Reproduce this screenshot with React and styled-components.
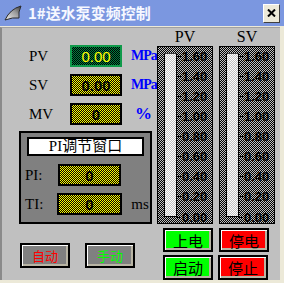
import React from 'react';
import styled, { createGlobalStyle, css } from 'styled-components';

const GlobalStyle = createGlobalStyle`
    html, body {
        margin: 0;
        padding: 0;
        background: #ece9d8;
    }
    body {
        font-family: "Liberation Serif", "Noto Sans CJK SC", serif;
    }
`;

// 1px dither brush aligned to the window, like a GDI pattern brush:
// XOR of two stripe layers gives a black/white checker, then tint it
const dither = (color, mode = 'multiply', shift = 1) => css`
    background:
        linear-gradient(${color}, ${color}),
        linear-gradient(90deg, #fff 1px, #000 1px) ${shift}px 0 / 2px 2px fixed,
        linear-gradient(#fff 1px, #000 1px) 0 0 / 2px 2px fixed;
    background-blend-mode: ${mode}, difference, normal;
`;

const Window = styled.div`
    width: 284px;
    height: 283px;
    display: flex;
    flex-direction: column;
    background: #ece9d8;
    overflow: hidden;
`;

const TitleBar = styled.div`
    height: 26px;
    flex: none;
    display: flex;
    align-items: center;
    gap: 5px;
    padding: 0 4px 0 4px;
    background: #7b97e0;
`;

const TitleText = styled.span`
    color: #f6f8ff;
    font: bold 15px "Noto Sans CJK SC", sans-serif;
    line-height: 26px;
`;

const CloseButton = styled.div`
    margin-left: auto;
    width: 17px;
    height: 19px;
    box-sizing: border-box;
    background: #ece9d8;
    border: 1px solid;
    border-color: #fff #404040 #404040 #fff;
    display: flex;
    align-items: center;
    justify-content: center;
`;

const Body = styled.div`
    flex: 1;
    margin: 1px 4px 3px 0;
    border-top: 1px solid #a0a0a0;
    border-left: 2px solid #8a8a8a;
    background: #c0c0c0;
    display: flex;
`;

const LeftPane = styled.div`
    width: 150px;
    padding-top: 17px;
    display: flex;
    flex-direction: column;
`;

const ValueRow = styled.div`
    display: grid;
    grid-template-columns: 32px 52px max-content;
    column-gap: 9px;
    align-items: center;
    height: 22px;
    padding-left: 27px;
    margin-bottom: ${p => p.$gap || 0}px;
`;

const Label = styled.span`
    font-size: 15px;
    color: #000;
`;

const ValueBox = styled.div`
    height: 22px;
    width: ${p => p.$w || 52}px;
    box-sizing: border-box;
    border: 2px solid ${p => p.$border || '#000'};
    ${p => dither(p.$tint || '#ffff00', 'multiply', p.$shift ?? 1)};
    display: flex;
    align-items: center;
    justify-content: center;
    color: ${p => p.$color || '#000'};
    font: ${p => p.$weight || 'bold'} 15px "Liberation Sans", sans-serif;
`;

const Unit = styled.span`
    color: #0000ff;
    font: bold ${p => p.$size || 14}px "Liberation Serif", serif;
    letter-spacing: ${p => p.$spacing || 0}px;
    padding-left: ${p => p.$pad || 0}px;
`;

const Panel = styled.div`
    margin: 6px 0 0 17px;
    width: 133px;
    height: 93px;
    box-sizing: border-box;
    border: 2px solid #000;
    background: #808080;
    padding: 4px 0 0 4px;
`;

const PanelTitle = styled.div`
    margin-left: 2px;
    width: 117px;
    height: 19px;
    box-sizing: border-box;
    border: 2px solid #000;
    background: #fff;
    font-size: 15px;
    line-height: 15px;
    text-align: center;
    color: #000;
`;

const PanelRow = styled.div`
    display: grid;
    grid-template-columns: ${p => p.$label}px auto auto;
    align-items: center;
    column-gap: 8px;
    margin-top: ${p => p.$top}px;
    font-size: 15px;
`;

const ButtonRow = styled.div`
    display: flex;
    gap: ${p => p.$gap}px;
    margin-top: ${p => p.$top}px;
    padding-left: ${p => p.$left}px;
`;

const ModeButton = styled.div`
    width: 50px;
    height: 25px;
    box-sizing: border-box;
    border: 2px solid #000;
    background: #808080;
    box-shadow: inset 1px 1px 0 #fff, inset -2px -2px 0 #b8b4a4;
    color: ${p => p.$color};
    font: 13px "Noto Sans CJK SC", sans-serif;
    display: flex;
    align-items: center;
    justify-content: center;
`;

const RightPane = styled.div`
    flex: 1;
    padding-left: 5px;
    display: flex;
    flex-direction: column;
`;

const GaugeHeads = styled.div`
    display: grid;
    grid-template-columns: 56px 56px;
    column-gap: 6px;
    height: 18px;
    line-height: 18px;
    text-align: center;
    font-size: 16px;
`;

const GaugeRow = styled.div`
    display: flex;
    gap: 6px;
    height: 178px;
`;

const Gauge = styled.div`
    width: 56px;
    box-sizing: border-box;
    border: 1px solid #000;
    ${dither('#c0c0c0')};
    display: flex;
    align-items: flex-start;
`;

const Bar = styled.div`
    width: 13px;
    height: 164px;
    box-sizing: border-box;
    margin: 6px 0 0 6px;
    border: 1px solid #000;
    border-top-color: #404040;
    ${dither('#c0c0c0', 'screen')};
`;

const Scale = styled.div`
    height: 173px;
    margin-top: 3px;
    display: flex;
    flex-direction: column;
    justify-content: space-between;
`;

const ScaleRow = styled.div`
    height: 12px;
    display: flex;
    align-items: center;
    font: bold 13px "Liberation Sans", sans-serif;
    color: #000;
`;

const Tick = styled.span`
    width: 4px;
    height: 1px;
    background: #000;
    margin-right: 1px;
`;

const PowerButton = styled.div`
    width: 50px;
    height: ${p => p.$h}px;
    box-sizing: border-box;
    border: 2px solid #000;
    background: ${p => p.$bg};
    box-shadow: inset 1px 1px 0 #fff, inset -2px -2px 0 #b8b4a4;
    color: #000;
    font: 15px "Noto Sans CJK SC", sans-serif;
    display: flex;
    align-items: center;
    justify-content: center;
`;

const ticks = ['1.60', '1.40', '1.20', '1.00', '0.80', '0.60', '0.40', '0.20', '0.00'];

const GaugeColumn = () => (
    <Gauge>
        <Bar />
        <Scale>
            {ticks.map(t => (
                <ScaleRow key={t}>
                    <Tick />
                    {t}
                </ScaleRow>
            ))}
        </Scale>
    </Gauge>
);

const App = () => (
    <>
        <GlobalStyle />
        <Window>
            <TitleBar>
                <svg width="19" height="17" viewBox="0 0 19 17">
                    <defs>
                        <linearGradient id="fin" x1="0" y1="1" x2="1" y2="0">
                            <stop offset="0" stopColor="#f4f4f4" />
                            <stop offset="0.6" stopColor="#9a9a9a" />
                            <stop offset="1" stopColor="#3a3a3a" />
                        </linearGradient>
                    </defs>
                    <path d="M1 15 Q6 4 17 1 Q14 7 15 13 Q9 12 1 15 Z" fill="url(#fin)" stroke="#2a2a2a" strokeWidth="1" />
                </svg>
                <TitleText>1#送水泵变频控制</TitleText>
                <CloseButton>
                    <svg width="9" height="8" viewBox="0 0 9 8">
                        <path d="M1 0.5 L8 7.5 M8 0.5 L1 7.5" stroke="#000" strokeWidth="2" />
                    </svg>
                </CloseButton>
            </TitleBar>
            <Body>
                <LeftPane>
                    <ValueRow $gap={7}>
                        <Label>PV</Label>
                        <ValueBox $border="#0f9a4a" $tint="#008040" $shift={0} $color="#ffff00" $weight="normal">
                            0.00
                        </ValueBox>
                        <Unit $spacing={-1}>MPa</Unit>
                    </ValueRow>
                    <ValueRow $gap={7}>
                        <Label>SV</Label>
                        <ValueBox>0.00</ValueBox>
                        <Unit $spacing={-1}>MPa</Unit>
                    </ValueRow>
                    <ValueRow>
                        <Label>MV</Label>
                        <ValueBox>0</ValueBox>
                        <Unit $size={17} $pad={4}>%</Unit>
                    </ValueRow>

                    <Panel>
                        <PanelTitle>PI调节窗口</PanelTitle>
                        <PanelRow $label={25} $top={8}>
                            <span>PI:</span>
                            <ValueBox $w={63}>0</ValueBox>
                        </PanelRow>
                        <PanelRow $label={24} $top={7}>
                            <span>TI:</span>
                            <ValueBox $w={65}>0</ValueBox>
                            <span>ms</span>
                        </PanelRow>
                    </Panel>

                    <ButtonRow $gap={15} $top={19} $left={18}>
                        <ModeButton $color="#ff0000">自动</ModeButton>
                        <ModeButton $color="#00ff00">手动</ModeButton>
                    </ButtonRow>
                </LeftPane>

                <RightPane>
                    <GaugeHeads>
                        <span>PV</span>
                        <span>SV</span>
                    </GaugeHeads>
                    <GaugeRow>
                        <GaugeColumn />
                        <GaugeColumn />
                    </GaugeRow>
                    <ButtonRow $gap={6} $top={4} $left={6}>
                        <PowerButton $bg="#00ff00" $h={24}>上电</PowerButton>
                        <PowerButton $bg="#ff0000" $h={24}>停电</PowerButton>
                    </ButtonRow>
                    <ButtonRow $gap={5} $top={3} $left={6}>
                        <PowerButton $bg="#00ff00" $h={25}>启动</PowerButton>
                        <PowerButton $bg="#ff0000" $h={25}>停止</PowerButton>
                    </ButtonRow>
                </RightPane>
            </Body>
        </Window>
    </>
);

export default App;
